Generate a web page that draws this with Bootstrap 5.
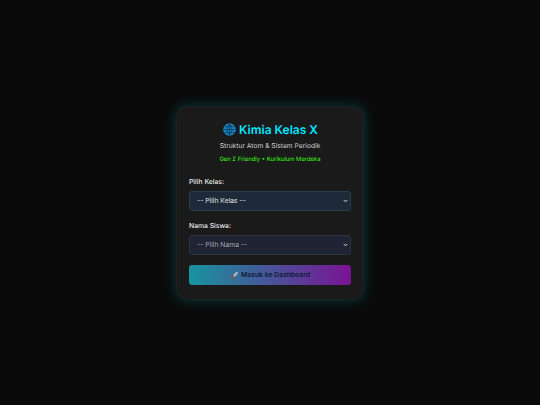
<!DOCTYPE html>
<html lang="id">
<head>
<meta charset="utf-8">
<title>Kimia Kelas X</title>
<link href="https://cdn.jsdelivr.net/npm/bootstrap@5.3.0/dist/css/bootstrap.min.css" rel="stylesheet">
<style>
html,body{height:100%}
body{background:#0a0a0a;font-family:Inter,"Liberation Sans",sans-serif;overflow:hidden;text-rendering:geometricPrecision}
.login-panel{width:188px;height:194px;margin-top:1px;background:#1a1a1a;border:1px solid rgba(0,255,255,.04);border-radius:11px;padding:14px 12px 12px;box-shadow:0 0 13px rgba(0,255,255,.2)}
.login-title{font-size:12px;font-weight:600;color:#00e5ff;line-height:17px;margin:0 0 3px;gap:3px;padding-left:1px}
.login-title svg{width:13px;height:13px;flex:none}
.login-sub{font-size:6.7px;color:#cfcfcf;line-height:10px;margin:0 0 4px}
.login-tag{font-size:5.9px;color:#39ff14;line-height:9px;margin:0 0 13px}
.field-label{font-size:6.8px;font-weight:500;color:#e8e8e8;line-height:10px;margin:0 0 4px;display:block}
.field-select{height:20px;min-height:0;font-family:inherit;font-size:6.8px;line-height:12px;padding:0 14px 0 7px;border-radius:3px;border:1px solid #2c3a4a;background-color:#1e2a3a;color:#e0e0e0;background-position:right 2px center;background-size:5px 4px;background-image:url("data:image/svg+xml,%3csvg xmlns='http://www.w3.org/2000/svg' viewBox='0 0 16 16'%3e%3cpath fill='none' stroke='%23dddddd' stroke-linecap='round' stroke-linejoin='round' stroke-width='4' d='m2 5 6 6 6-6'/%3e%3c/svg%3e")}
.field-select.name-select{background-color:#1e2433;border-color:#2c3442;color:#a0a6b0;margin-bottom:10px}
.field-select.class-select{margin-bottom:10px;border-color:#2a3b4d}
.enter-btn{height:20px;width:100%;border:0;border-radius:3px;padding:0;background:linear-gradient(90deg,#17949e,#7a1394);color:#101a38;font-size:6.8px;font-weight:600;gap:2px}
.enter-btn svg{width:9px;height:9px;flex:none}
</style>
</head>
<body>
<main class="d-flex align-items-center justify-content-center h-100">
  <section class="login-panel">
    <h1 class="login-title d-flex align-items-center justify-content-center">
      <svg viewBox="0 0 16 16" aria-hidden="true"><circle cx="8" cy="8" r="7.2" fill="#1484c4" stroke="#2a9ad6" stroke-width=".8"/><path d="M1 8h14M2 4.500h12M2 11.500h12M8 1v14M8 1C4 4.500 4 11.500 8 15M8 1c4 3.500 4 10.500 0 14" fill="none" stroke="#07324f" stroke-width=".8"/></svg>
      <span>Kimia Kelas X</span>
    </h1>
    <p class="login-sub text-center">Struktur Atom &amp; Sistem Periodik</p>
    <p class="login-tag text-center">Gen Z Friendly • Kurikulum Merdeka</p>
    <form>
      <label class="field-label" for="kelas">Pilih Kelas:</label>
      <select class="form-select field-select class-select" id="kelas"><option>-- Pilih Kelas --</option></select>
      <label class="field-label" for="nama">Nama Siswa:</label>
      <select class="form-select field-select name-select" id="nama"><option>-- Pilih Nama --</option></select>
      <button type="button" class="btn enter-btn d-flex align-items-center justify-content-center">
        <svg viewBox="0 0 16 16" aria-hidden="true"><path d="M14.500 1.500c-4 .3-7 2.500-9 6.500l2.500 2.500c4-2 6.200-5 6.500-9z" fill="#aeb4bd"/><path d="M5.500 8l-3 .5L1 10.500l3 .2zM8 10.500l-.5 3-2 1.500-.2-3z" fill="#b5342e"/><path d="M4 12l-2 2 .3-2.500z" fill="#d98a2b"/></svg>
        <span>Masuk ke Dashboard</span>
      </button>
    </form>
  </section>
</main>
<script src="https://cdn.jsdelivr.net/npm/bootstrap@5.3.0/dist/js/bootstrap.bundle.min.js"></script>
</body>
</html>
